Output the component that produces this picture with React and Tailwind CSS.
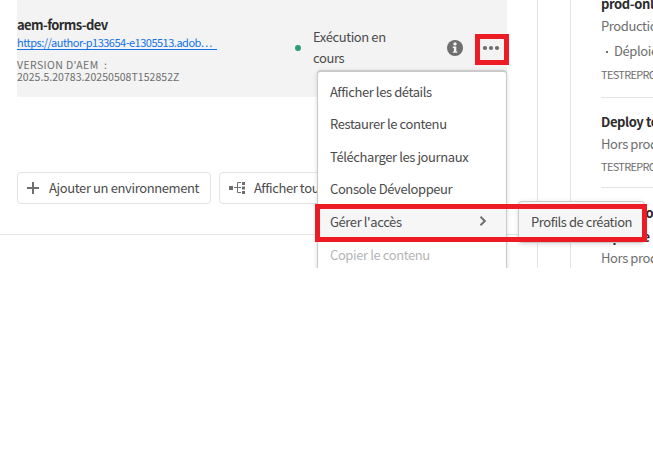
const MENU = [
  { label: "Afficher les détails", row: "h-[32px]" },
  { label: "Restaurer le contenu", row: "h-[33px]" },
  { label: "Télécharger les journaux", row: "h-[32px]" },
  { label: "Console Développeur", row: "h-[33px]" },
  { label: "Gérer l'accès", row: "h-[33px] bg-[#f6f6f6]", arrow: true },
  { label: "Copier le contenu", row: "h-[32px] text-[#b5b5b5]" },
];

function InfoIcon() {
  return (
    <svg width="16" height="16" viewBox="0 0 16 16">
      <circle cx="8" cy="8" r="8" fill="#6e6e6e" />
      <circle cx="8" cy="3.9" r="1.7" fill="#f3f3f3" />
      <path d="M5.8 6.6H9.3V11.4H10.3V12.8H5.8V11.4H6.9V8H5.8Z" fill="#f3f3f3" />
    </svg>
  );
}

function TreeIcon() {
  return (
    <svg width="17" height="16" viewBox="0 0 17 16" fill="#6e6e6e">
      <path d="M0 6H4V10H0ZM13 2H16V5H13ZM13 6.5H16V9.5H13ZM13 11H16V14H13Z" />
      <path d="M5 7.5H12M12 2.5H8.5V12.5H12" fill="none" stroke="#6e6e6e" />
    </svg>
  );
}

function ContextMenu() {
  return (
    <div className="absolute left-[317px] top-[70px] h-[210px] w-[190px] rounded-[4px] border border-t-2 border-[#cacaca] bg-white pt-[4px] shadow-[0_1px_4px_rgba(0,0,0,0.15)]">
      {MENU.map((item) => (
        <div key={item.label} className={"flex justify-between pl-[12px] pr-[19px] leading-[32px] " + item.row}>
          <span>{item.label}</span>
          {item.arrow && (
            <svg className="mt-[10px]" width="8" height="10" viewBox="0 0 8 10" fill="none" stroke="#6e6e6e" strokeWidth="2">
              <path d="M1.5 0.8L5.8 5L1.5 9.2" />
            </svg>
          )}
        </div>
      ))}
    </div>
  );
}

function Environment() {
  return (
    <div className="ml-[17px] flex h-[97px] w-[490px] bg-[#f3f3f3]">
      <div className="w-[277px] pt-[15px]">
        <div className="h-[20px] text-[13px] font-bold leading-[20px] tracking-[-0.6px] text-[#2c2c2c]">aem-forms-dev</div>
        <div className="h-[15px] w-[200px] border-b border-[#1473e6] text-[11px] leading-[15px] tracking-[-0.5px] text-[#1473e6]">
          https://author-p133654-e1305513.adob…
        </div>
        <div className="mt-[8px] whitespace-pre text-[10.5px] leading-[13px] text-[#6e6e6e]">
          <div className="h-[12px] tracking-[0.4px]">{"VERSION D'AEM  :"}</div>
          <div className="tracking-[0.04px]">2025.5.20783.20250508T152852Z</div>
        </div>
      </div>
      <div className="ml-px mt-[45px] h-[6px] w-[6px] rounded-full bg-[#2d9d78]" />
      <div className="ml-[12px] mt-[26px] w-[134px] leading-[21px]">
        Exécution en
        <br />
        cours
      </div>
      <div className="mt-[40px]">
        <InfoIcon />
      </div>
      <svg className="ml-[20px] mt-[45px]" width="18" height="6" viewBox="0 0 18 6" fill="#6e6e6e">
        <circle cx="2" cy="3" r="2.1" />
        <circle cx="8" cy="3" r="2.1" />
        <circle cx="14" cy="3" r="2.1" />
      </svg>
    </div>
  );
}

function Pipelines() {
  return (
    <div className="ml-[32px] w-[83px] shrink-0 overflow-hidden border-l border-[#e4e4e4] pl-[30px] text-[#6e6e6e]">
      <div className="-mt-[6px] h-[21px] font-bold leading-[20px] text-[#2c2c2c]">prod-only</div>
      <div className="h-[24px] leading-[22px]">Production</div>
      <div className="flex h-[24px] leading-[23px]">
        <span className="ml-[5px] mr-[6px] mt-[12px] h-[2px] w-[2px] shrink-0 bg-[#6e6e6e]" />Déploiement
      </div>
      <div className="h-[34px] text-[11px] leading-[23px] tracking-[-0.7px]">TESTREPRO</div>
      <div className="h-px bg-[#e4e4e4]" />
      <div className="mt-[13px] h-[22px] font-bold leading-[22px] text-[#2c2c2c]">Deploy to</div>
      <div className="h-[22px] leading-[22px]">Hors prod</div>
      <div className="h-[32px] text-[11px] leading-[23px] tracking-[-0.7px]">TESTREPRO</div>
      <div className="h-px bg-[#e4e4e4]" />
      <div className="mt-[13px] font-bold leading-[24px] tracking-[-0.5px] text-[#2c2c2c]">
        <div className="tracking-[-0.75px]">Main-prod</div>
        <div>Pipeline</div>
      </div>
      <div className="-mt-[2px] leading-[22px]">Hors prod</div>
    </div>
  );
}

export default function App() {
  return (
    <div className="h-[465px] w-[653px] bg-white">
      <div className="relative flex h-[268px] overflow-hidden whitespace-nowrap font-['Noto_Sans_CJK_SC','Noto_Sans',sans-serif] text-[13px] tracking-[-0.4px] text-[#4b4b4b]">
        <div className="w-[538px] shrink-0 border-r border-[#e4e4e4]">
          <div className="h-[234px]">
            <Environment />
            <div className="ml-[17px] flex gap-[8px] pt-[75px]">
              <div className="flex h-[32px] w-[194px] items-center rounded-[4px] border border-[#e4e4e4] pl-[9px] tracking-[-0.38px]">
                <svg className="mr-[10px]" width="12" height="12" viewBox="0 0 12 12">
                  <path d="M6 0V12M0 6H12" stroke="#6e6e6e" strokeWidth="2" />
                </svg>
                Ajouter un environnement
              </div>
              <div className="flex h-[32px] w-[190px] items-center rounded-[4px] border border-[#e4e4e4] pl-[9px]">
                <TreeIcon />
                <span className="ml-[8px]">Afficher tout</span>
              </div>
            </div>
          </div>
          <div className="h-px bg-[#e4e4e4]" />
        </div>
        <Pipelines />
        <ContextMenu />
        <div className="absolute left-[518px] top-[201px] flex h-[42px] w-[127px] items-center rounded-[4px] border border-[#cacaca] bg-[#f6f6f6] pl-[12px] tracking-[-0.45px] shadow-[0_1px_4px_rgba(0,0,0,0.15)]">
          Profils de création
        </div>
        <div className="absolute left-[475px] top-[34px] h-[31px] w-[34px] border-[5px] border-[#ed1c24]" />
        <div className="absolute left-[315px] top-[204px] h-[38px] w-[332px] border-[5px] border-[#ed1c24]" />
      </div>
    </div>
  );
}
